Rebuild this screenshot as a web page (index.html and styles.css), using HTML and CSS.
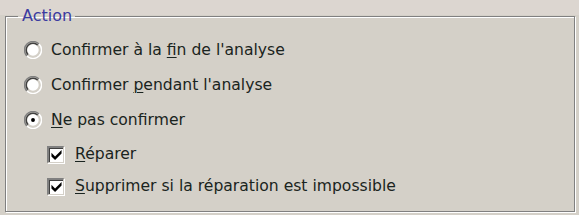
FILE: index.html
```html
<!doctype html>
<html lang="fr">
<head>
    <meta charset="UTF-8">
    <title>Action</title>
    <link rel="stylesheet" href="styles.css">
</head>
<body>
<div class="page">
    <fieldset class="group">
        <legend>Action</legend>
        <label class="opt radio">
            <svg class="rb" viewBox="0 0 12 12" width="18" height="18">
                <path d="M10 2A5.6 5.6 0 0 0 2 10" fill="none" stroke="#808080" stroke-width="1"/>
                <path d="M9.2 2.8A4.5 4.5 0 0 0 2.8 9.2" fill="none" stroke="#404040" stroke-width="1"/>
                <path d="M2 10A5.6 5.6 0 0 0 10 2" fill="none" stroke="#fff" stroke-width="1"/>
                <path d="M2.8 9.2A4.5 4.5 0 0 0 9.2 2.8" fill="none" stroke="#d4d0c8" stroke-width="1"/>
                <circle cx="6" cy="6" r="3.8" fill="#fff"/>
            </svg>
            <span>Confirmer à la <u>f</u>in de l'analyse</span>
        </label>
        <label class="opt radio">
            <svg class="rb" viewBox="0 0 12 12" width="18" height="18">
                <path d="M10 2A5.6 5.6 0 0 0 2 10" fill="none" stroke="#808080" stroke-width="1"/>
                <path d="M9.2 2.8A4.5 4.5 0 0 0 2.8 9.2" fill="none" stroke="#404040" stroke-width="1"/>
                <path d="M2 10A5.6 5.6 0 0 0 10 2" fill="none" stroke="#fff" stroke-width="1"/>
                <path d="M2.8 9.2A4.5 4.5 0 0 0 9.2 2.8" fill="none" stroke="#d4d0c8" stroke-width="1"/>
                <circle cx="6" cy="6" r="3.8" fill="#fff"/>
            </svg>
            <span>Confirmer <u>p</u>endant l'analyse</span>
        </label>
        <label class="opt radio">
            <svg class="rb" viewBox="0 0 12 12" width="18" height="18">
                <path d="M10 2A5.6 5.6 0 0 0 2 10" fill="none" stroke="#808080" stroke-width="1"/>
                <path d="M9.2 2.8A4.5 4.5 0 0 0 2.8 9.2" fill="none" stroke="#404040" stroke-width="1"/>
                <path d="M2 10A5.6 5.6 0 0 0 10 2" fill="none" stroke="#fff" stroke-width="1"/>
                <path d="M2.8 9.2A4.5 4.5 0 0 0 9.2 2.8" fill="none" stroke="#d4d0c8" stroke-width="1"/>
                <circle cx="6" cy="6" r="3.8" fill="#fff"/>
                <circle cx="6" cy="6" r="1.3" fill="#000"/>
            </svg>
            <span><u>N</u>e pas confirmer</span>
        </label>
        <label class="opt check first">
            <span class="cb">
                <svg viewBox="0 0 9 9" width="13" height="13"><path d="M1 3.3L3.5 5.8L8 1.3V3.8L3.5 8.3L1 5.8Z" fill="#000"/></svg>
            </span>
            <span><u>R</u>éparer</span>
        </label>
        <label class="opt check">
            <span class="cb">
                <svg viewBox="0 0 9 9" width="13" height="13"><path d="M1 3.3L3.5 5.8L8 1.3V3.8L3.5 8.3L1 5.8Z" fill="#000"/></svg>
            </span>
            <span><u>S</u>upprimer si la réparation est impossible</span>
        </label>
    </fieldset>
</div>
</body>
</html>
```

FILE: styles.css
```css
*{
    margin: 0;
    padding: 0;
    box-sizing: border-box;
}
body{
    background: #fff;
    font-family: "DejaVu Sans", sans-serif;
    font-size: 15.6px;
    color: #1a2420;
}
.page{
    width: 579px;
    height: 215px;
    background: linear-gradient(#dcd6d0 0, #dcd6d0 15px, #d4d0c8 15px);
    padding: 7px 4px 3px 5px;
}
.group{
    height: 205px;
    border: 1px solid #808080;
    box-shadow: inset 1px 1px 0 #fff, 1px 1px 0 #fff;
    padding: 7px 0 0 18px;
}
.group legend{
    margin-left: -6px;
    padding: 0 3px 0 4px;
    color: #3a3aa0;
    font-size: 16px;
    line-height: 18px;
}
.opt{
    display: flex;
    align-items: center;
    height: 35px;
}
.opt.check{
    height: 32px;
    padding-left: 23px;
}
.opt.first{
    margin-top: 1px;
}
.rb{
    margin-right: 9px;
    flex: none;
}
.cb{
    width: 17px;
    height: 17px;
    margin-right: 11px;
    background: #fff;
    border-top: 2px solid #808080;
    border-left: 2px solid #808080;
    border-right: 1px solid #d4d0c8;
    border-bottom: 1px solid #d4d0c8;
    box-shadow: inset 1px 1px 0 #404040, 1px 1px 0 #fff;
    display: flex;
    align-items: center;
    justify-content: center;
    flex: none;
}
u{
    text-decoration-thickness: 1px;
    text-underline-offset: 2px;
}
```
